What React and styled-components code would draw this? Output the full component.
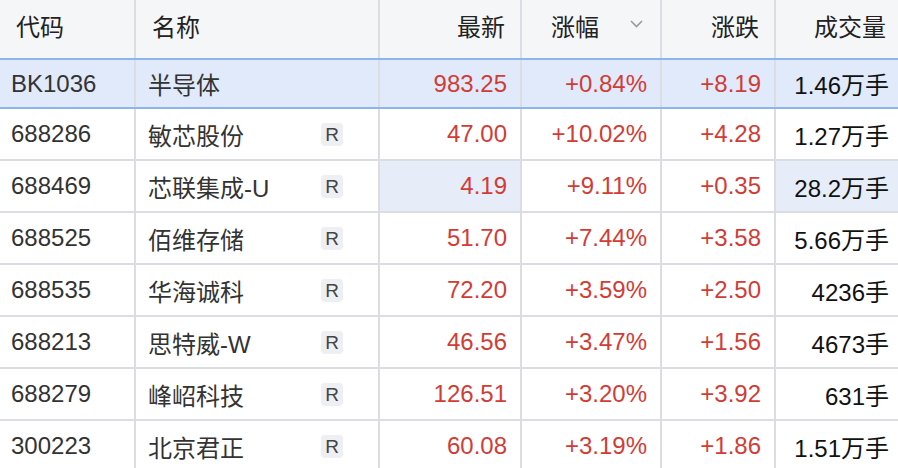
import React from 'react';
import styled, { createGlobalStyle } from 'styled-components';

const Global = createGlobalStyle`
  html, body { margin: 0; padding: 0; background: #fff; }
  body {
    font-family: "Liberation Sans", Arial, "Noto Sans CJK SC", sans-serif;
    -webkit-font-smoothing: antialiased;
  }
  * { box-sizing: border-box; }
`;

const COLS = '136px 244px 142px 140px 114px 1fr';

const Table = styled.div`
  width: 898px;
  height: 468px;
  overflow: hidden;
  font-size: 24px;
`;

const HeaderRow = styled.div`
  display: grid;
  grid-template-columns: ${COLS};
  height: 58px;
  background: #f5f6f8;
`;

const HeadCell = styled.div`
  display: flex;
  align-items: center;
  justify-content: ${(p) => (p.$right ? 'flex-end' : 'flex-start')};
  padding: 0 ${(p) => p.$pr ?? 13}px 7px ${(p) => p.$pl ?? 16}px;
  border-right: 2px solid #dcdde2;
  color: #222;
  &:last-child { border-right: none; }
`;

const SortIcon = styled.svg`
  margin-left: 31px;
  width: 13px;
  height: 8px;
  flex: none;
  margin-bottom: 4px;
`;

const Row = styled.div`
  display: grid;
  grid-template-columns: ${COLS};
  height: ${(p) => (p.$selected ? 51 : 52)}px;
  background: ${(p) => (p.$selected ? '#e0eafa' : '#fff')};
  border-top: ${(p) => (p.$selected ? '2px solid #8db4ef' : 'none')};
  border-bottom: 2px solid ${(p) => (p.$selected ? '#8db4ef' : '#dcdde2')};
`;

const Cell = styled.div`
  display: flex;
  align-items: center;
  justify-content: ${(p) => (p.$right ? 'flex-end' : 'flex-start')};
  padding: 0 ${(p) => p.$pr ?? 13}px 0 ${(p) => p.$pl ?? 11}px;
  border-right: 2px solid #dcdde2;
  background: ${(p) => (p.$flash ? '#e6edf9' : 'transparent')};
  color: ${(p) => p.$color || '#333'};
  white-space: nowrap;
  &:last-child { border-right: none; }
`;

const NameCell = styled(Cell)`
  justify-content: space-between;
  padding: 0 35px 0 12px;
`;

const Badge = styled.span`
  display: inline-flex;
  align-items: center;
  justify-content: center;
  width: 22px;
  height: 23px;
  border-radius: 4px;
  background: #eeeff2;
  color: #444;
  font-size: 19px;
  font-weight: 500;
  line-height: 1;
`;

const RED = '#d23c36';

const rows = [
  { code: 'BK1036', name: '半导体', price: '983.25', pct: '+0.84%', chg: '+8.19', vol: '1.46万手', selected: true },
  { code: '688286', name: '敏芯股份', r: true, price: '47.00', pct: '+10.02%', chg: '+4.28', vol: '1.27万手' },
  { code: '688469', name: '芯联集成-U', r: true, price: '4.19', pct: '+9.11%', chg: '+0.35', vol: '28.2万手', flash: true },
  { code: '688525', name: '佰维存储', r: true, price: '51.70', pct: '+7.44%', chg: '+3.58', vol: '5.66万手' },
  { code: '688535', name: '华海诚科', r: true, price: '72.20', pct: '+3.59%', chg: '+2.50', vol: '4236手' },
  { code: '688213', name: '思特威-W', r: true, price: '46.56', pct: '+3.47%', chg: '+1.56', vol: '4673手' },
  { code: '688279', name: '峰岹科技', r: true, price: '126.51', pct: '+3.20%', chg: '+3.92', vol: '631手' },
  { code: '300223', name: '北京君正', r: true, price: '60.08', pct: '+3.19%', chg: '+1.86', vol: '1.51万手' },
];

export default function App() {
  return (
    <>
      <Global />
      <Table>
        <HeaderRow>
          <HeadCell>代码</HeadCell>
          <HeadCell>名称</HeadCell>
          <HeadCell $right $pr={15}>最新</HeadCell>
          <HeadCell $right $pr={17}>
            涨幅
            <SortIcon viewBox="0 0 13 8">
              <polyline points="1,1 6.5,6.5 12,1" fill="none" stroke="#9a9a9e" strokeWidth="1.6" />
            </SortIcon>
          </HeadCell>
          <HeadCell $right $pr={15}>涨跌</HeadCell>
          <HeadCell $right $pr={12}>成交量</HeadCell>
        </HeaderRow>
        {rows.map((r) => (
          <Row key={r.code} $selected={r.selected}>
            <Cell>{r.code}</Cell>
            <NameCell>
              <span>{r.name}</span>
              {r.r && <Badge>R</Badge>}
            </NameCell>
            <Cell $right $color={RED} $flash={r.flash}>{r.price}</Cell>
            <Cell $right $color={RED}>{r.pct}</Cell>
            <Cell $right $color={RED}>{r.chg}</Cell>
            <Cell $right $pr={9} $color="#111" $flash={r.flash}>{r.vol}</Cell>
          </Row>
        ))}
      </Table>
    </>
  );
}
